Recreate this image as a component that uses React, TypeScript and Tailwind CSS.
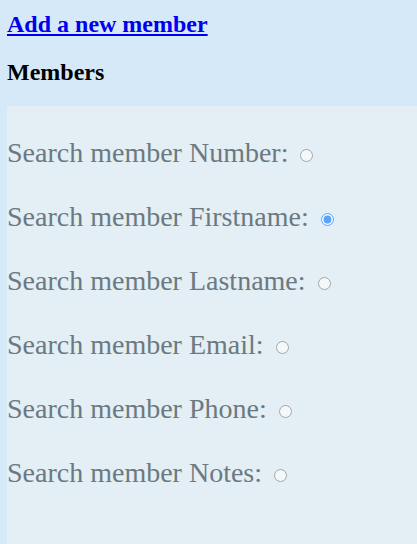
import React from "react";

const rows = [
  { label: "Number", checked: false },
  { label: "Firstname", checked: true },
  { label: "Lastname", checked: false },
  { label: "Email", checked: false },
  { label: "Phone", checked: false },
  { label: "Notes", checked: false },
];

export default function App() {
  return (
    <div
      className="min-h-[544px] bg-[#d6e9f8] pl-[7px]"
      style={{ fontFamily: '"Liberation Serif", "Times New Roman", serif' }}
    >
      <div className="pt-[10px]">
        <a href="#" className="text-[24px] leading-[28px] font-bold text-[#0000ee] underline">
          Add a new member
        </a>
      </div>
      <div className="mt-[19px] text-[24px] leading-[28px] font-bold text-black">Members</div>
      <div className="mt-[20px] bg-[#e3eef5] min-h-[439px] pt-[15px]">
        {rows.map((r) => (
          <div key={r.label} className="h-[64px] flex items-center">
            <label className="text-[28px] leading-[32px] text-[#6b7980]">
              Search member {r.label}:{" "}
              <input
                type="radio"
                name="search"
                defaultChecked={r.checked}
                className="opacity-60 ml-[5px] mr-[3px] mt-[3px]"
              />
            </label>
          </div>
        ))}
      </div>
    </div>
  );
}
